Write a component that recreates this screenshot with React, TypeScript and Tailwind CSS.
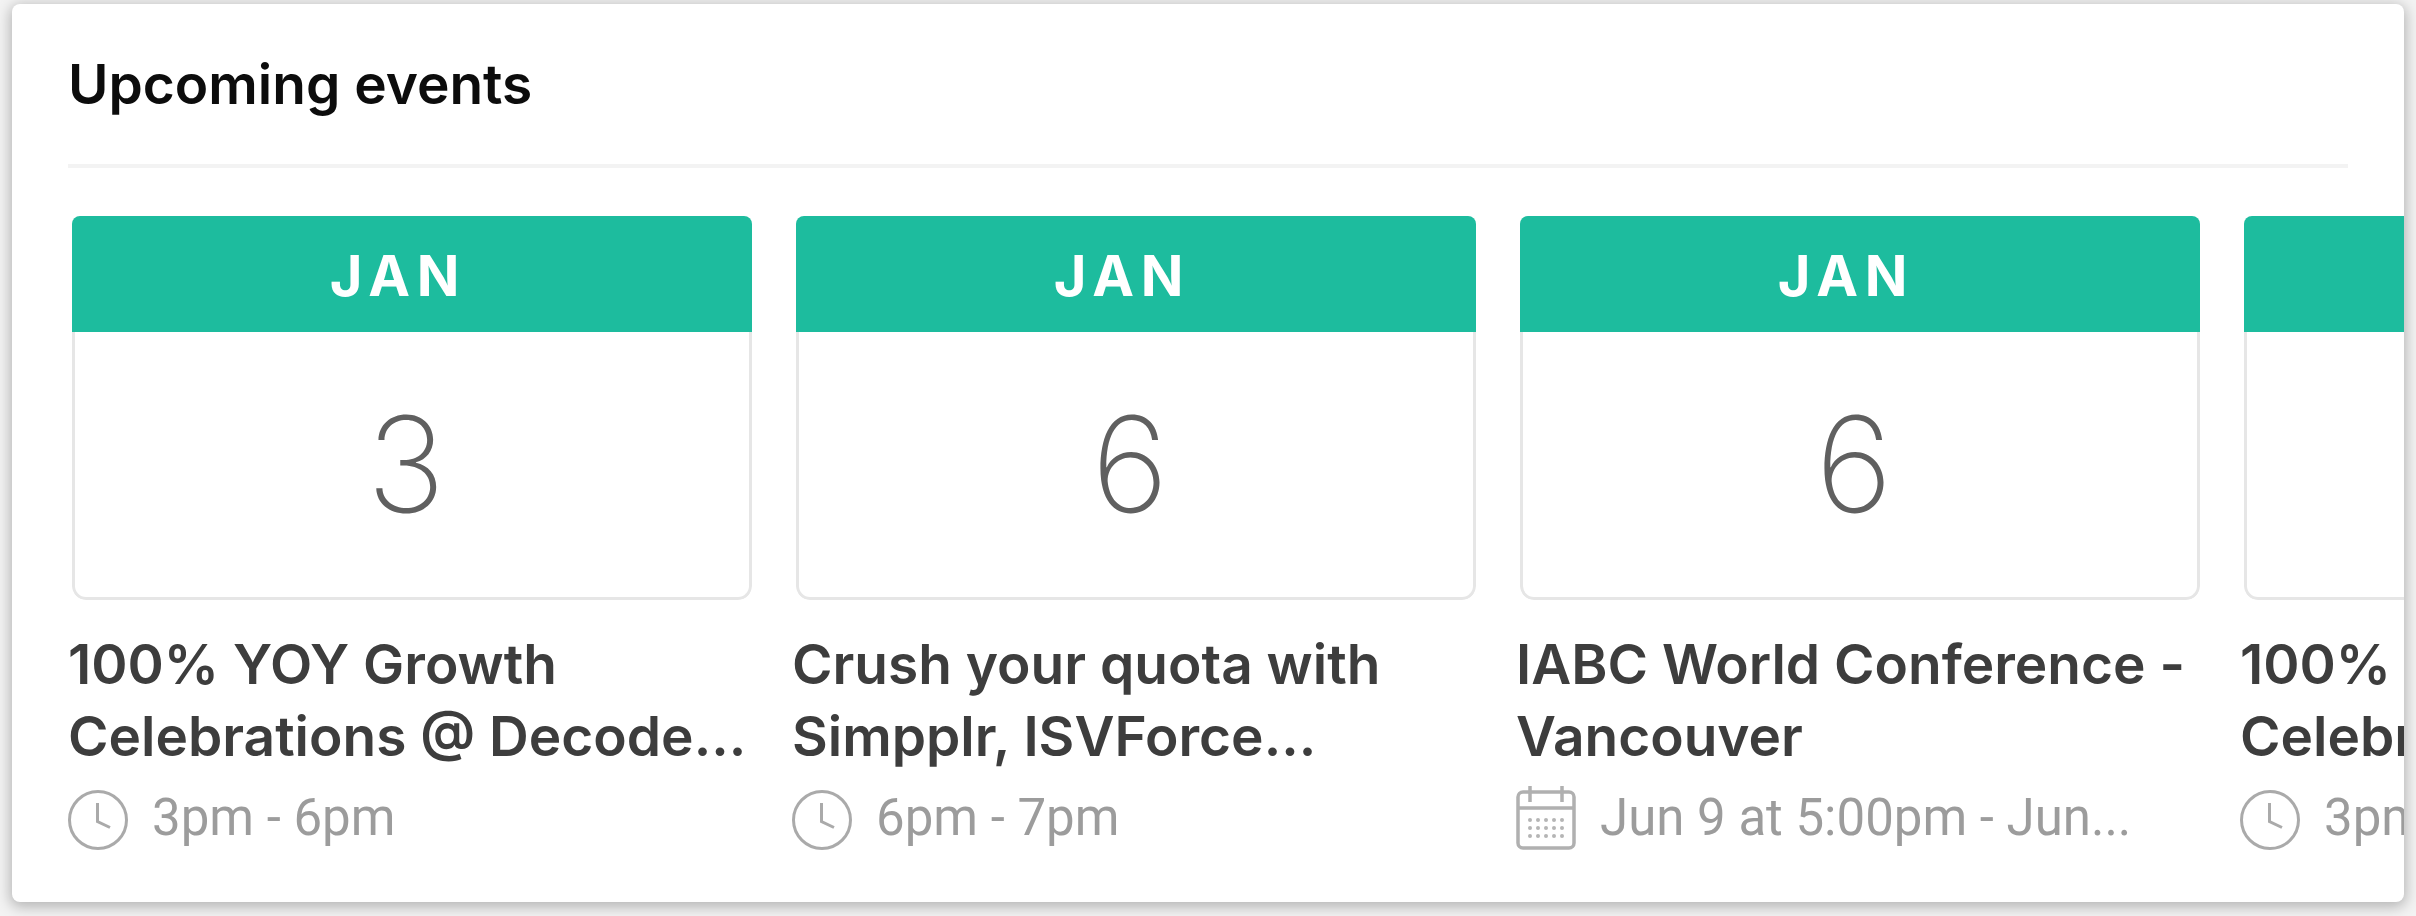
type CalendarEvent = {
  id: number;
  month: string;
  day: string;
  title: [string, string];
  time: string;
  icon: 'clock' | 'calendar';
};

const events: CalendarEvent[] = [
  { id: 1, month: 'JAN', day: '3', title: ['100% YOY Growth', 'Celebrations @ Decode...'], time: '3pm - 6pm', icon: 'clock' },
  { id: 2, month: 'JAN', day: '6', title: ['Crush your quota with', 'Simpplr, ISVForce...'], time: '6pm - 7pm', icon: 'clock' },
  { id: 3, month: 'JAN', day: '6', title: ['IABC World Conference -', 'Vancouver'], time: 'Jun 9 at 5:00pm - Jun...', icon: 'calendar' },
  { id: 4, month: 'JAN', day: '6', title: ['100% YOY Growth', 'Celebrations @ Decode...'], time: '3pm - 6pm', icon: 'clock' },
];

function ClockIcon() {
  return (
    <svg viewBox="0 0 60 64" className="h-16 w-15 shrink-0" fill="none" stroke="#aaaaaa" strokeWidth="3" aria-hidden="true">
      <circle cx="30" cy="34" r="28.5" />
      <path d="M29.5 17v18.5l12.5 6" />
    </svg>
  );
}

const dotColumns = [14, 22, 30, 38, 46];
const dotRows = [34, 42, 50];

function CalendarIcon() {
  return (
    <svg viewBox="0 0 60 64" className="h-16 w-15 shrink-0" fill="none" stroke="#b0b0b0" strokeWidth="3.5" aria-hidden="true">
      <rect x="2" y="6" width="56" height="56" rx="5" />
      <path d="M2 22h56M14 0v16M46 0v16" />
      {dotRows.map((y) =>
        dotColumns.map((x) => <circle key={`${x}-${y}`} cx={x} cy={y} r="2" fill="#b5b5b5" stroke="none" />),
      )}
    </svg>
  );
}

function EventCard({ event }: { event: CalendarEvent }) {
  return (
    <li className="w-[684px] shrink-0">
      <div className="ml-1 overflow-hidden rounded-t-lg rounded-b-[14px] text-center">
        <div className="bg-[#1dbc9e] pt-1 pr-7 text-[56px] leading-[112px] font-bold tracking-[0.12em] text-white">{event.month}</div>
        <div className="rounded-b-[14px] border-3 border-t-0 border-[#e6e6e6] pr-3 text-[132px] leading-[265px] font-extralight text-[#606060]">
          {event.day}
        </div>
      </div>
      <h3 className="mt-7 text-[55px] leading-[72px] font-semibold whitespace-nowrap text-[#3d3d3d]">
        {event.title[0]}
        <br />
        {event.title[1]}
      </h3>
      <p className="mt-[10px] flex items-center gap-6 font-[Roboto,sans-serif] text-[51px] leading-[72px] whitespace-nowrap text-[#9c9c9c]">
        {event.icon === 'clock' ? <ClockIcon /> : <CalendarIcon />}
        {event.time}
      </p>
    </li>
  );
}

export default function App() {
  return (
    <main className="min-h-screen bg-[#f3f3f3] px-3 pt-1 pb-3">
      <section className="overflow-hidden rounded-lg bg-white pb-12 font-[Inter,sans-serif] shadow-[0_3px_14px_2px_rgba(0,0,0,0.26)]">
        <header className="mx-14 border-b-4 border-[#f3f3f3] pt-11 pb-11">
          <h2 className="text-[55px] leading-[72px] font-semibold text-[#0c0c0c]">Upcoming events</h2>
        </header>
        <ul className="flex gap-10 overflow-hidden pt-12 pl-14">
          {events.map((event) => (
            <EventCard key={event.id} event={event} />
          ))}
        </ul>
      </section>
    </main>
  );
}
